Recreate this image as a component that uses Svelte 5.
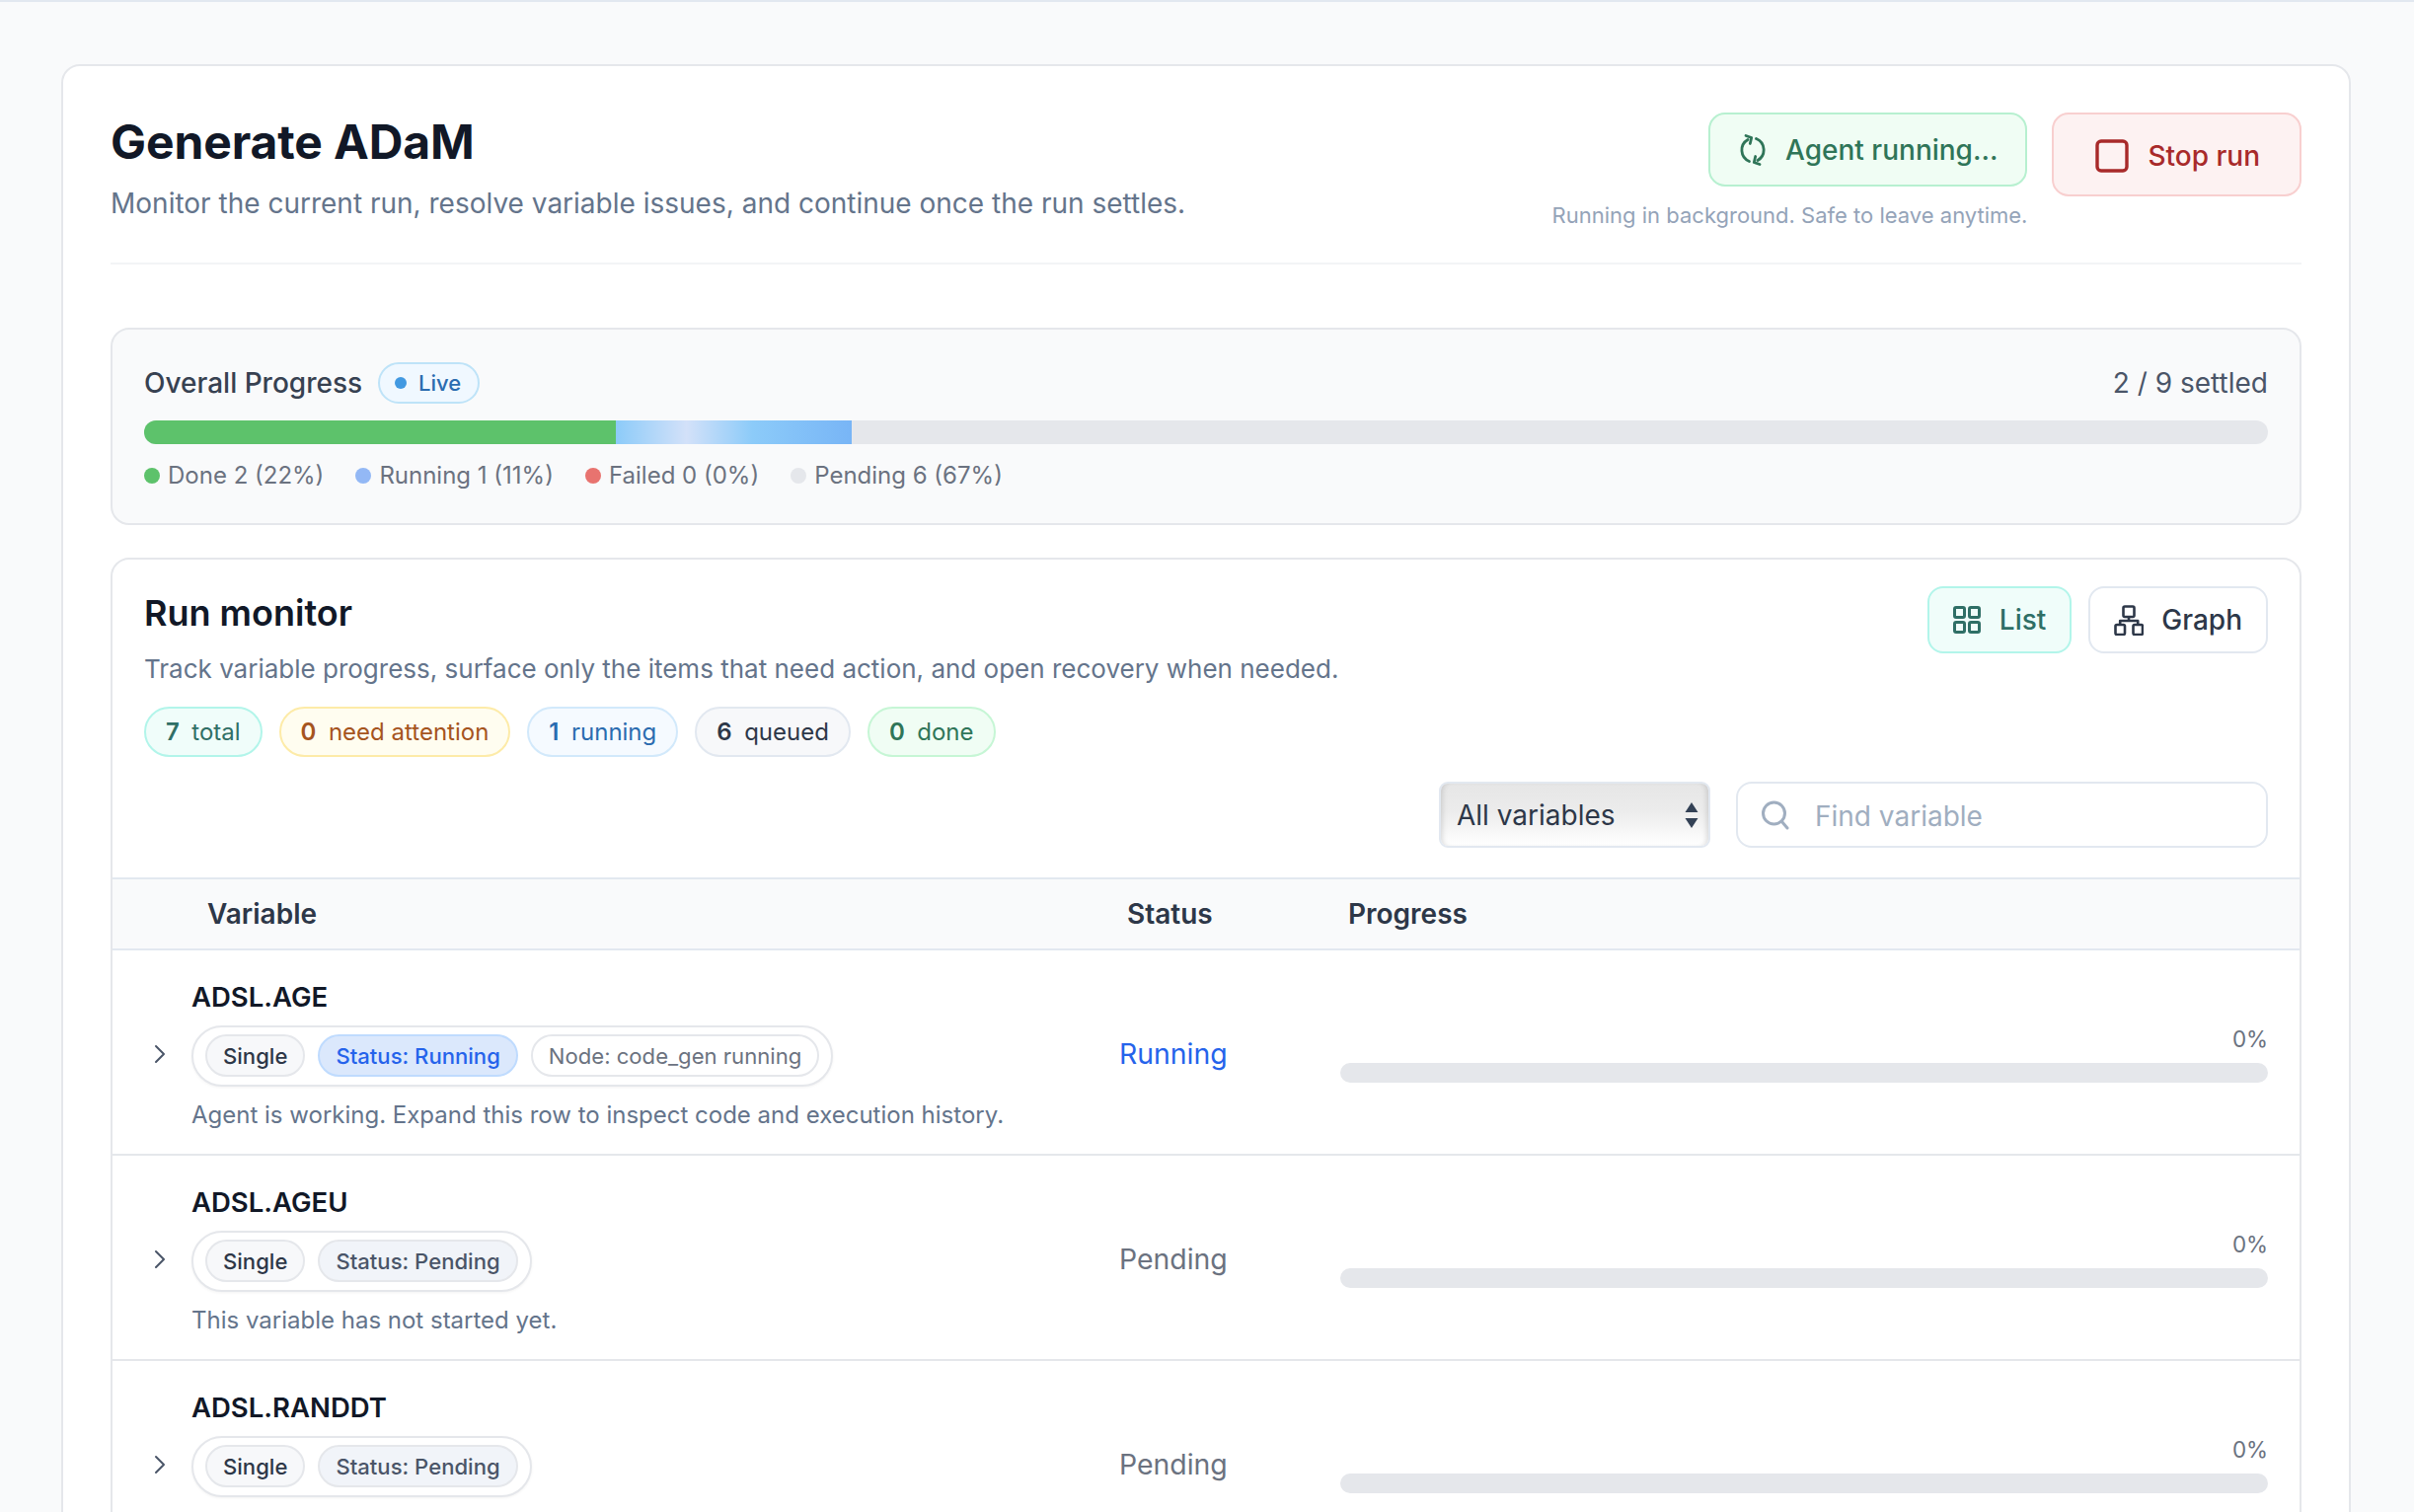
<script>
  const legend = [
    { label: 'Done 2 (22%)', color: '#5dc26b' },
    { label: 'Running 1 (11%)', color: '#93b8f5' },
    { label: 'Failed 0 (0%)', color: '#e8736f' },
    { label: 'Pending 6 (67%)', color: '#e5e7eb' }
  ]

  const counts = [
    { n: 7, label: 'total', kind: 'teal' },
    { n: 0, label: 'need attention', kind: 'amber' },
    { n: 1, label: 'running', kind: 'blue' },
    { n: 6, label: 'queued', kind: 'gray' },
    { n: 0, label: 'done', kind: 'green' }
  ]

  const rows = [
    {
      name: 'ADSL.AGE',
      status: 'Running',
      node: 'Node: code_gen running',
      note: 'Agent is working. Expand this row to inspect code and execution history.'
    },
    { name: 'ADSL.AGEU', status: 'Pending', note: 'This variable has not started yet.' },
    { name: 'ADSL.RANDDT', status: 'Pending', note: '' }
  ]
</script>

<div class="page">
  <main class="panel">
    <header class="head">
      <div class="head-text">
        <h1>Generate ADaM</h1>
        <p>Monitor the current run, resolve variable issues, and continue once the run settles.</p>
      </div>
      <div class="head-actions">
        <div class="agent">
          <div class="agent-badge">
            <svg class="spin" viewBox="0 0 28 34" fill="none" stroke="currentColor" stroke-width="2.8" stroke-linecap="round" stroke-linejoin="round">
              <path d="M9 6.5A12.3 12.3 0 0 0 10.5 28.5" />
              <path d="M19 27.5A12.3 12.3 0 0 0 17.5 5.5" />
              <path d="M7 2.5L12.7 4.5L11.3 10.5" />
              <path d="M21 31.5L15.3 29.5L16.7 23.5" />
            </svg>
            Agent running...
          </div>
          <span class="agent-note">Running in background. Safe to leave anytime.</span>
        </div>
        <button class="stop">
          <svg viewBox="0 0 34 34" fill="none" stroke="currentColor" stroke-width="3.4"><rect x="2" y="2" width="30" height="30" rx="4" /></svg>
          Stop run
        </button>
      </div>
    </header>

    <section class="overall">
      <div class="overall-top">
        <div class="overall-title">
          <span>Overall Progress</span>
          <span class="live"><i></i>Live</span>
        </div>
        <span class="settled">2 / 9 settled</span>
      </div>
      <div class="bar">
        <div class="bar-done"></div>
        <div class="bar-running"></div>
      </div>
      <div class="legend">
        {#each legend as item}
          <span class="legend-item"><i style="background: {item.color}"></i>{item.label}</span>
        {/each}
      </div>
    </section>

    <section class="monitor">
      <div class="monitor-top">
        <div class="monitor-intro">
          <h2>Run monitor</h2>
          <p>Track variable progress, surface only the items that need action, and open recovery when needed.</p>
          <div class="counts">
            {#each counts as c}
              <span class="count {c.kind}"><b>{c.n}</b>{c.label}</span>
            {/each}
          </div>
        </div>
        <div class="views">
          <button class="view active">
            <svg viewBox="0 0 28 28" fill="none" stroke="currentColor" stroke-width="3">
              <rect x="1.5" y="1.5" width="10" height="10" rx="1.5" />
              <rect x="16.5" y="1.5" width="10" height="10" rx="1.5" />
              <rect x="1.5" y="16.5" width="10" height="10" rx="1.5" />
              <rect x="16.5" y="16.5" width="10" height="10" rx="1.5" />
            </svg>
            List
          </button>
          <button class="view">
            <svg viewBox="0 0 30 31" fill="none" stroke="currentColor" stroke-width="2.6" stroke-linejoin="round">
              <rect x="9.5" y="1.5" width="11" height="10.5" rx="1.5" />
              <rect x="1.5" y="20" width="9.5" height="10" rx="1.5" />
              <rect x="19.5" y="20" width="9.5" height="10" rx="1.5" />
              <path d="M15 12V16M6.2 20V16H24.2V20" />
            </svg>
            Graph
          </button>
        </div>
      </div>

      <div class="filters">
        <div class="select-wrap">
          <select>
            <option>All variables</option>
          </select>
          <svg viewBox="0 0 14 26" fill="#334155"><path d="M7 0L13.5 10H.5zM7 26L.5 16h13z" /></svg>
        </div>
        <label class="search">
          <svg viewBox="0 0 28 30" fill="none" stroke="#a0aec0" stroke-width="3" stroke-linecap="round">
            <circle cx="12.5" cy="13" r="11" />
            <path d="M20.5 21.5L26 28" />
          </svg>
          <input type="text" placeholder="Find variable" />
        </label>
      </div>

      <div class="thead">
        <span class="th-var">Variable</span>
        <span class="th-status">Status</span>
        <span class="th-progress">Progress</span>
      </div>

      {#each rows as row}
        <div class="row">
          <div class="chevron">
            <svg viewBox="0 0 12 20" fill="none" stroke="#4a5568" stroke-width="2" stroke-linecap="round" stroke-linejoin="round"><path d="M2 2l8 8-8 8" /></svg>
          </div>
          <div class="variable">
            <div class="var-name">{row.name}</div>
            <div class="chips">
              <span class="chip">Single</span>
              <span class="chip {row.status === 'Running' ? 'chip-running' : 'chip-pending'}">Status: {row.status}</span>
              {#if row.node}
                <span class="chip chip-node">{row.node}</span>
              {/if}
            </div>
            <div class="var-note">{row.note}</div>
          </div>
          <div class="status" class:running={row.status === 'Running'}>{row.status}</div>
          <div class="progress">
            <span>0%</span>
            <div class="progress-track"></div>
          </div>
        </div>
      {/each}
    </section>
  </main>
</div>

<style>
  :global(body) {
    margin: 0;
    overflow: hidden;
  }

  .page {
    height: 1530px;
    overflow: hidden;
    background: #f9fafb;
    border-top: 2px solid #e2e8f0;
    padding: 63px 64px 0 62px;
    font-family: Inter, 'Noto Sans', sans-serif;
    color: #111827;
  }

  button {
    font-family: inherit;
    cursor: pointer;
  }

  h1, h2, p {
    margin: 0;
  }

  .panel {
    background: #fff;
    border: 2px solid #e5e7eb;
    border-radius: 19px;
    padding: 0 48px;
    min-height: 1600px;
  }

  .head {
    display: flex;
    justify-content: space-between;
    align-items: flex-start;
    height: 201px;
    box-sizing: border-box;
    padding-top: 47px;
    border-bottom: 2px solid #f3f4f6;
  }

  .head-text {
    padding-top: 1px;
  }

  .head h1 {
    font-size: 48px;
    line-height: 58px;
    font-weight: 700;
    letter-spacing: -0.1px;
    color: #111827;
  }

  .head p {
    margin-top: 13px;
    font-size: 28px;
    line-height: 40px;
    color: #64748b;
  }

  .head-actions {
    display: flex;
    align-items: flex-start;
    gap: 25px;
  }

  .agent {
    display: flex;
    flex-direction: column;
    align-items: flex-end;
    gap: 13px;
  }

  .agent-badge {
    display: flex;
    align-items: center;
    gap: 19px;
    box-sizing: border-box;
    height: 75px;
    padding: 0 28px 0 29px;
    background: #f0fdf4;
    border: 2px solid #b7f0d0;
    border-radius: 17px;
    color: #2f7558;
    font-size: 28px;
    font-weight: 500;
  }

  .spin {
    width: 28px;
    height: 34px;
  }

  .agent-note {
    font-size: 22px;
    line-height: 32px;
    color: #94a3b8;
  }

  .stop {
    display: flex;
    align-items: center;
    gap: 19px;
    box-sizing: border-box;
    height: 85px;
    padding: 2px 40px 0 42px;
    background: #fdf2f2;
    border: 2px solid #f8cfcf;
    border-radius: 17px;
    color: #a82a2a;
    font-size: 28px;
    font-weight: 500;
  }

  .stop svg {
    width: 34px;
    height: 34px;
  }

  .overall {
    margin-top: 64px;
    box-sizing: border-box;
    height: 200px;
    padding: 32px 32px 0;
    background: #f9fafb;
    border: 2px solid #e5e7eb;
    border-radius: 19px;
  }

  .overall-top {
    display: flex;
    justify-content: space-between;
    align-items: center;
    height: 44px;
  }

  .overall-title {
    display: flex;
    align-items: center;
    gap: 16px;
    font-size: 28px;
    font-weight: 500;
    color: #374151;
  }

  .settled {
    font-size: 28px;
    color: #4a5568;
  }

  .live {
    display: flex;
    align-items: center;
    gap: 12px;
    box-sizing: border-box;
    height: 42px;
    padding: 0 17px 0 15px;
    background: #f0f8ff;
    border: 2px solid #bee3f8;
    border-radius: 21px;
    font-size: 22px;
    font-weight: 500;
    color: #2b6cb0;
  }

  .live i {
    width: 12px;
    height: 12px;
    border-radius: 50%;
    background: #4299e1;
  }

  .bar {
    display: flex;
    height: 24px;
    margin-top: 16px;
    background: #e5e7eb;
    border-radius: 12px;
    overflow: hidden;
  }

  .bar-done {
    width: 22.22%;
    background: #5dc26b;
  }

  .bar-running {
    width: 11.11%;
    background: linear-gradient(90deg, #8ccbf9 0%, #d3e1f9 30%, #8ccbf9 58%, #78b5f6 100%);
  }

  .legend {
    display: flex;
    gap: 32px;
    margin-top: 16px;
    font-size: 24px;
    line-height: 32px;
    color: #6b7280;
  }

  .legend-item {
    display: flex;
    align-items: center;
    gap: 8px;
  }

  .legend-item i {
    width: 16px;
    height: 16px;
    border-radius: 50%;
  }

  .monitor {
    margin-top: 33px;
    background: #fff;
    border: 2px solid #e5e7eb;
    border-radius: 19px;
  }

  .monitor-top {
    display: flex;
    justify-content: space-between;
    padding: 27px 32px 0;
  }

  .monitor-intro {
    padding-top: 5px;
  }

  .monitor h2 {
    font-size: 36px;
    line-height: 44px;
    font-weight: 600;
    color: #111827;
  }

  .monitor-intro p {
    margin-top: 17px;
    font-size: 26px;
    line-height: 36px;
    color: #64748b;
  }

  .counts {
    display: flex;
    gap: 17px;
    margin-top: 20px;
  }

  .count {
    display: flex;
    align-items: center;
    gap: 12.5px;
    box-sizing: border-box;
    height: 51px;
    padding: 0 20px;
    border: 2px solid;
    border-radius: 26px;
    font-size: 24px;
  }

  .count b {
    font-weight: 600;
  }

  .teal { background: #f0fdfa; border-color: #b2f5ea; color: #2f6f66; }
  .amber { background: #fffdf0; border-color: #fdeba8; color: #a5541e; }
  .blue { background: #f5faff; border-color: #d2e9fb; color: #2b6cb0; }
  .gray { background: #f7f8fa; border-color: #e2e8f0; color: #2d3748; }
  .green { background: #f0fdf4; border-color: #c6f6d5; color: #2f7558; }

  .views {
    display: flex;
    gap: 17px;
  }

  .view {
    display: flex;
    align-items: center;
    gap: 19px;
    box-sizing: border-box;
    height: 68px;
    padding: 0 24px;
    background: #fff;
    border: 2px solid #e2e8f0;
    border-radius: 16px;
    font-size: 28px;
    font-weight: 500;
    color: #2d3748;
  }

  .view.active {
    background: #f0fdfa;
    border-color: #b2f5ea;
    color: #2f6f66;
  }

  .view svg {
    width: 28px;
    height: 28px;
  }

  .view:last-child {
    gap: 18px;
  }

  .view:last-child svg {
    width: 30px;
    height: 31px;
  }

  .filters {
    display: flex;
    justify-content: flex-end;
    gap: 26px;
    padding: 25px 32px 0 0;
  }

  .select-wrap {
    position: relative;
    width: 275px;
    height: 67px;
  }

  .select-wrap select {
    appearance: none;
    display: block;
    width: 100%;
    height: 100%;
    box-sizing: border-box;
    padding: 0 16px;
    border: 2px solid #e2e8f0;
    border-radius: 9px;
    background: linear-gradient(180deg, #e6e6e6 0%, #ececec 45%, #ffffff 100%);
    box-shadow: inset 5px 0 5px -3px rgba(0, 0, 0, 0.12), inset -5px 0 5px -3px rgba(0, 0, 0, 0.12);
    font-family: inherit;
    font-size: 28px;
    color: #2d3748;
  }

  .select-wrap svg {
    position: absolute;
    right: 12px;
    top: 21px;
    width: 14px;
    height: 26px;
    pointer-events: none;
  }

  .search {
    display: flex;
    align-items: center;
    gap: 26px;
    box-sizing: border-box;
    width: 539px;
    height: 67px;
    padding: 0 24px;
    border: 2px solid #e2e8f0;
    border-radius: 16px;
    background: #fff;
  }

  .search svg {
    width: 28px;
    height: 30px;
    flex: none;
  }

  .search input {
    flex: 1;
    min-width: 0;
    border: 0;
    outline: 0;
    padding: 2px 0 0;
    background: transparent;
    font-family: inherit;
    font-size: 28px;
    color: #2d3748;
  }

  .search input::placeholder {
    color: #a0aec0;
    opacity: 1;
  }

  .thead, .row {
    display: grid;
    grid-template-columns: 80px 940px 224px 1fr;
    padding-right: 32px;
  }

  .thead {
    align-items: center;
    height: 74px;
    box-sizing: border-box;
    margin-top: 30px;
    background: #f9fafb;
    border-top: 2px solid #e2e8f0;
    border-bottom: 2px solid #e2e8f0;
    font-size: 28px;
    font-weight: 600;
    color: #2d3748;
  }

  .th-var {
    grid-column: 2;
    padding-left: 16px;
  }

  .th-status, .th-progress {
    padding-left: 8px;
  }

  .row {
    align-items: center;
    height: 208px;
    box-sizing: border-box;
    border-bottom: 2px solid #e5e7eb;
  }

  .chevron {
    display: flex;
    justify-content: flex-end;
    padding-right: 26px;
    padding-top: 4px;
  }

  .chevron svg {
    width: 12px;
    height: 20px;
  }

  .variable {
    padding-top: 6px;
  }

  .var-name {
    font-size: 27.5px;
    line-height: 36px;
    font-weight: 600;
    color: #111827;
  }

  .chips {
    display: inline-flex;
    align-items: center;
    gap: 13px;
    box-sizing: border-box;
    height: 62px;
    margin-top: 11px;
    padding: 0 12px;
    background: #fff;
    border: 2px solid #e5e7eb;
    border-radius: 31px;
    box-shadow: 0 1px 3px rgba(0, 0, 0, 0.05);
    vertical-align: top;
  }

  .chip {
    display: flex;
    align-items: center;
    box-sizing: border-box;
    height: 43px;
    padding: 0 16px;
    background: #f7f8fa;
    border: 2px solid #e5e7eb;
    border-radius: 22px;
    font-size: 22.1px;
    font-weight: 500;
    color: #2d3748;
  }

  .chip-running {
    background: #dbe8fc;
    border-color: #bfdbfe;
    color: #2563eb;
  }

  .chip-pending {
    background: #f1f4f9;
    color: #4a5568;
  }

  .chip-node {
    background: #fff;
    font-weight: 400;
    color: #6b7280;
  }

  .var-note {
    margin-top: 12px;
    min-height: 34px;
    font-size: 24px;
    line-height: 34px;
    color: #64748b;
  }

  .status {
    font-size: 28.4px;
    color: #6b7280;
    padding-top: 3px;
  }

  .status.running {
    color: #2563eb;
  }

  .progress {
    display: flex;
    flex-direction: column;
    align-items: flex-end;
    gap: 11px;
    margin-top: 5px;
  }

  .progress span {
    font-size: 22.4px;
    line-height: 26px;
    color: #6b7280;
  }

  .progress-track {
    width: 100%;
    height: 20px;
    border-radius: 10px;
    background: #e5e7eb;
  }
</style>
